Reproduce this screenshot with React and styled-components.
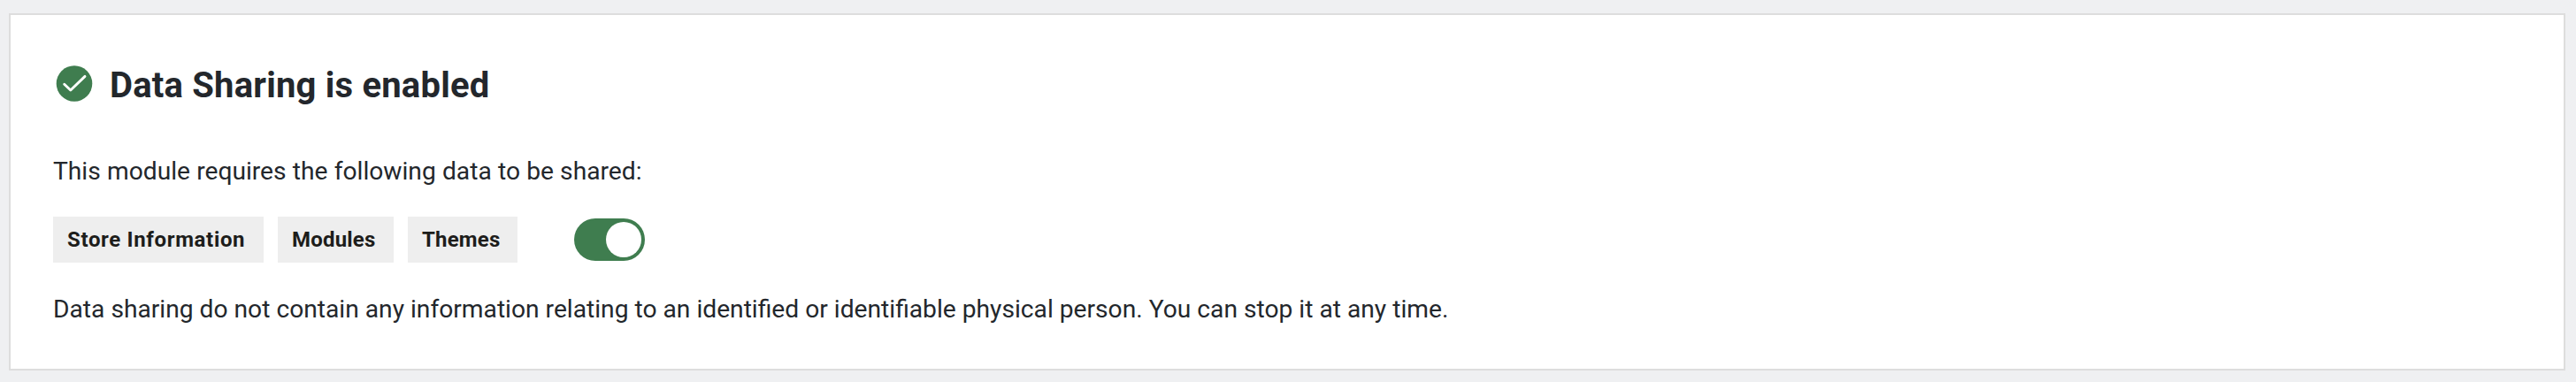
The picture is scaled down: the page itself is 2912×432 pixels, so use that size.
import React, { useState } from "react";
import styled, { createGlobalStyle } from "styled-components";

const GlobalStyle = createGlobalStyle`
  * { box-sizing: border-box; }
  body {
    margin: 0;
    background: #eff0f2;
    color: #23272c;
    font-family: Roboto, "Liberation Sans", sans-serif;
  }
`;

const Page = styled.main`
  height: 432px;
  padding: 15px 12px 13px 10px;
`;

const Card = styled.section`
  height: 404px;
  padding: 53px 48px 0;
  border: 2px solid #dddddd;
  background: #ffffff;
`;

const Header = styled.header`
  display: flex;
  align-items: flex-start;
  gap: 16px;
  height: 52px;
`;

const CheckIcon = styled.svg`
  width: 48px;
  height: 48px;
  flex: none;
`;

const Title = styled.h1`
  margin: 0;
  font-size: 40px;
  font-weight: 700;
  line-height: 53px;
  letter-spacing: 0.2px;
  white-space: nowrap;
`;

const Text = styled.p`
  margin: ${(p) => p.$top}px 0 0;
  font-size: 28.2px;
  line-height: 43px;
  word-spacing: ${(p) => p.$wordSpacing || 0}px;
  white-space: nowrap;
`;

const Controls = styled.div`
  display: flex;
  align-items: center;
  margin-top: 30px;
`;

const Tags = styled.div`
  display: flex;
  gap: 16px;
  margin-right: 64px;
`;

const Tag = styled.span`
  width: ${(p) => p.$width}px;
  height: 52px;
  padding-left: 16px;
  background: #eeeeee;
  color: #1d1d1b;
  font-size: 24px;
  font-weight: 700;
  line-height: 52px;
  letter-spacing: ${(p) => p.$spacing}px;
  white-space: nowrap;
`;

const Switch = styled.button`
  display: flex;
  justify-content: ${(p) => (p.$on ? "flex-end" : "flex-start")};
  width: 80px;
  height: 48px;
  padding: 4px;
  border: 0;
  border-radius: 24px;
  background: ${(p) => (p.$on ? "#3f7d4f" : "#bbbbbb")};
  cursor: pointer;
`;

const Knob = styled.span`
  width: 40px;
  height: 40px;
  border-radius: 50%;
  background: #ffffff;
`;

const tags = [
  { label: "Store Information", width: 238, spacing: 0.65 },
  { label: "Modules", width: 131, spacing: 0.2 },
  { label: "Themes", width: 124, spacing: 0.2 },
];

export default function App() {
  const [shared, setShared] = useState(true);
  return (
    <>
      <GlobalStyle />
      <Page>
        <Card>
          <Header>
            <CheckIcon viewBox="0 0 48 48" aria-hidden="true">
              <circle cx="24" cy="24.5" r="20.3" fill="#3f7d4f" />
              <path d="M12.7 25.2 19.8 32 36 16.4" fill="none" stroke="#fff" strokeWidth="2.9" strokeLinecap="round" strokeLinejoin="round" />
            </CheckIcon>
            <Title>Data Sharing is enabled</Title>
          </Header>
          <Text $top={50} $wordSpacing={0.2}>
            This module requires the following data to be shared:
          </Text>
          <Controls>
            <Tags>
              {tags.map((tag) => (
                <Tag key={tag.label} $width={tag.width} $spacing={tag.spacing}>
                  {tag.label}
                </Tag>
              ))}
            </Tags>
            <Switch
              type="button"
              role="switch"
              aria-checked={shared}
              aria-label="Data sharing"
              $on={shared}
              onClick={() => setShared(!shared)}
            >
              <Knob />
            </Switch>
          </Controls>
          <Text $top={31}>
            Data sharing do not contain any information relating to an identified or identifiable physical person. You can stop it at any time.
          </Text>
        </Card>
      </Page>
    </>
  );
}
